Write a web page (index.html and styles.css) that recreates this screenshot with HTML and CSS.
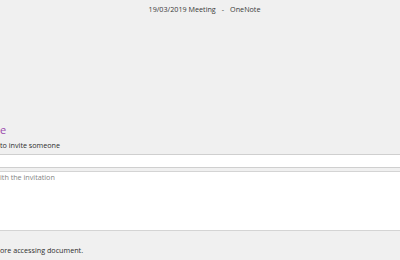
FILE: index.html
```html
<!DOCTYPE html>
<html lang="en">

<head>
  <meta charset="UTF-8" />
  <title>19/03/2019 Meeting - OneNote</title>
  <link rel="stylesheet" href="styles.css">
</head>

<body>
  <div class="titlebar">
    <span class="doc-name">19/03/2019 Meeting</span>
    <span class="sep">-</span>
    <span class="app-name">OneNote</span>
  </div>

  <div class="share-pane">
    <h2 class="pane-title">e</h2>
    <label class="field-label" for="invitee">to invite someone</label>
    <input type="text" id="invitee" class="invitee-input" />
    <textarea class="message-input" placeholder="ith the invitation"></textarea>
    <div class="note">ore accessing document.</div>
  </div>
</body>

</html>
```

FILE: styles.css
```css
* {
  box-sizing: border-box;
}

body {
  margin: 0;
  width: 400px;
  height: 260px;
  overflow: hidden;
  background: #f0f0f0;
  font-family: 'Open Sans', 'Noto Sans', sans-serif;
  color: #2e2e2e;
}

.titlebar {
  display: flex;
  justify-content: center;
  gap: 6px;
  height: 21px;
  padding-top: 4px;
  padding-left: 9px;
  font-size: 7.2px;
  line-height: 11px;
  color: #3a3a3a;
}

.share-pane {
  display: flex;
  flex-direction: column;
  padding-top: 102px;
}

.pane-title {
  margin: 0;
  height: 14px;
  font-size: 11px;
  font-weight: 400;
  line-height: 14px;
  color: #9a48ad;
}

.field-label {
  margin-top: 3px;
  font-size: 7.2px;
  line-height: 11px;
}

.invitee-input {
  margin-top: 3px;
  width: 420px;
  height: 14px;
  border: 1px solid #cfcfcf;
  border-left: none;
  background: #fff;
  outline: none;
}

.message-input {
  margin-top: 3px;
  width: 420px;
  height: 60px;
  padding: 0;
  border: 1px solid #d4d4d4;
  border-left: none;
  background: #fff;
  font-family: inherit;
  font-size: 7.2px;
  line-height: 11px;
  resize: none;
  outline: none;
}

.message-input::placeholder {
  color: #858585;
}

.note {
  margin-top: 14px;
  font-size: 7.2px;
  line-height: 11px;
}
```
